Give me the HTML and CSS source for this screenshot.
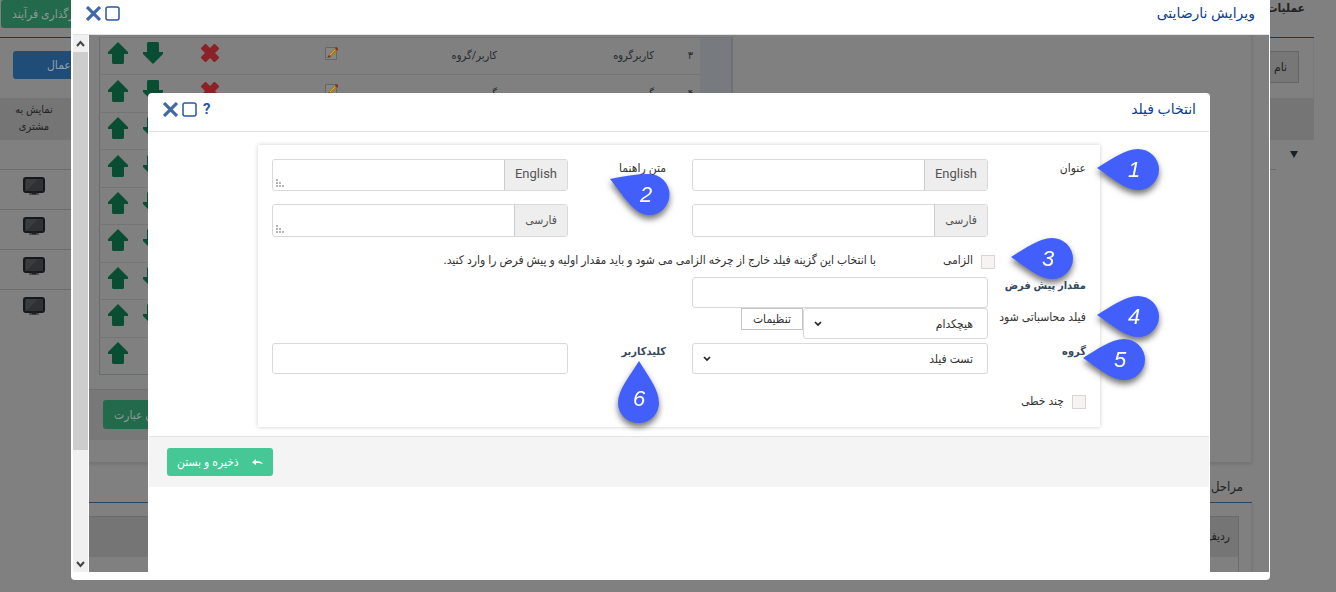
FILE: index.html
```html
<!DOCTYPE html>
<html lang="fa" dir="rtl">
<head>
<meta charset="utf-8">
<title>ویرایش نارضایتی</title>
<link rel="stylesheet" href="styles.css">
</head>
<body>
<svg class="defs" aria-hidden="true">
  <symbol id="arrow" viewBox="0 0 20 22"><path d="M10 0 20 10v2h-4v9l-1 1H5l-1-1v-9H0v-2z" fill="#094d33"/></symbol>
  <symbol id="cross" viewBox="0 0 18 18"><path d="M4 0h1l4 4 4-4h1l4 4v1l-4 4 4 4v1l-4 4h-1l-4-4-4 4H4l-4-4v-1l4-4-4-4V4z" fill="#8b2227"/></symbol>
  <symbol id="edit" viewBox="0 0 14 15"><path d="M.5 1.500h11v12H.5z" fill="#858585" stroke="#666"/><path d="m3 12 1-4 6-6 3 2-6 6z" fill="#a37b1c"/><path d="m5 9 5-5" stroke="#c8b355"/><path d="m10 2 1-1 2 1v2l-1 1z" fill="#803128"/><path d="m2 12 2-3 2 2z" fill="#6b3520"/></symbol>
  <symbol id="screen" viewBox="0 0 22 18"><rect x="1" y="1" width="20" height="14" rx="2" fill="#303133" stroke="#17181d" stroke-width="2"/><path d="M3 14 15 2H3z" fill="#3a3b3c"/><path d="M9 15h4v2H9zM6 17h10" fill="#17181d" stroke="#222329"/></symbol>
  <symbol id="close" viewBox="0 0 14 14"><path d="m2 2 10 10M12 2 2 12" stroke="#4068aa" stroke-width="3" stroke-linecap="square"/></symbol>
  <symbol id="box" viewBox="0 0 15 15"><rect x="1" y="1" width="13" height="13" rx="2" fill="none" stroke="#2b56a0" stroke-width="1.500"/></symbol>
  <symbol id="chevron" viewBox="0 0 8 6"><path d="m1 1 3 3 3-3" fill="none" stroke="#222" stroke-width="1.700"/></symbol>
  <symbol id="grip" viewBox="0 0 8 8"><path d="M0 0h2v2H0zM0 3h2v2H0zM3 3h2v2H3zM0 6h2v2H0zM3 6h2v2H3zM6 6h2v2H6z" fill="#b5b5b5"/></symbol>
  <symbol id="drop" viewBox="0 0 62 42"><path d="M0 19C15 10 28 0 41 0a21 20.500 0 0 1 0 41C28 41 15 29 0 19z" fill="#425ffc"/></symbol>
</svg>

<div class="page">
  <header class="page-head">
    <h1 class="page-title">عملیات</h1>
    <button class="btn green upload">بارگذاری فرآیند</button>
  </header>
  <div class="page-tools">
    <span class="name-tag">نام</span>
    <button class="btn blue apply">اعمال</button>
  </div>
  <div class="list-head"><span class="list-col">نمایش به مشتری</span></div>
  <div class="list">
    <div class="list-row first"><svg class="caret" viewBox="0 0 8 7"><path d="M0 0h8L4 7z" fill="#182028"/></svg></div>
    <div class="list-row"><svg class="screen"><use href="#screen"/></svg></div>
    <div class="list-row"><svg class="screen"><use href="#screen"/></svg></div>
    <div class="list-row"><svg class="screen"><use href="#screen"/></svg></div>
    <div class="list-row"><svg class="screen"><use href="#screen"/></svg></div>
  </div>
</div>

<section class="window outer">
  <header class="window-head outer-head">
    <h2 class="window-title">ویرایش نارضایتی</h2>
    <div class="window-tools">
      <button class="icon-btn" aria-label="بزرگ‌نمایی"><svg class="i-box"><use href="#box"/></svg></button>
      <button class="icon-btn" aria-label="بستن"><svg class="i-close"><use href="#close"/></svg></button>
    </div>
  </header>
  <div class="outer-body">
    <div class="content">
      <div class="panel">
        <div class="panel-split">
          <table class="steps">
            <tbody>
              <tr><td class="c-bar" rowspan="9"></td><td class="c-no">۳</td><td class="c-name">کاربرگروه</td><td class="c-type">کاربر/گروه</td><td class="c-edit"><svg class="i-edit"><use href="#edit"/></svg></td><td class="c-del"><svg class="i-del"><use href="#cross"/></svg></td><td class="c-down"><svg class="i-arrow down"><use href="#arrow"/></svg></td><td class="c-up"><svg class="i-arrow"><use href="#arrow"/></svg></td></tr>
              <tr><td class="c-no">۴</td><td>گروه</td><td>گروه</td><td><svg class="i-edit"><use href="#edit"/></svg></td><td><svg class="i-del"><use href="#cross"/></svg></td><td><svg class="i-arrow down"><use href="#arrow"/></svg></td><td><svg class="i-arrow"><use href="#arrow"/></svg></td></tr>
              <tr><td></td><td></td><td></td><td></td><td></td><td><svg class="i-arrow down"><use href="#arrow"/></svg></td><td><svg class="i-arrow"><use href="#arrow"/></svg></td></tr>
              <tr><td></td><td></td><td></td><td></td><td></td><td><svg class="i-arrow down"><use href="#arrow"/></svg></td><td><svg class="i-arrow"><use href="#arrow"/></svg></td></tr>
              <tr><td></td><td></td><td></td><td></td><td></td><td><svg class="i-arrow down"><use href="#arrow"/></svg></td><td><svg class="i-arrow"><use href="#arrow"/></svg></td></tr>
              <tr><td></td><td></td><td></td><td></td><td></td><td><svg class="i-arrow down"><use href="#arrow"/></svg></td><td><svg class="i-arrow"><use href="#arrow"/></svg></td></tr>
              <tr><td></td><td></td><td></td><td></td><td></td><td><svg class="i-arrow down"><use href="#arrow"/></svg></td><td><svg class="i-arrow"><use href="#arrow"/></svg></td></tr>
              <tr><td></td><td></td><td></td><td></td><td></td><td><svg class="i-arrow down"><use href="#arrow"/></svg></td><td><svg class="i-arrow"><use href="#arrow"/></svg></td></tr>
              <tr><td></td><td></td><td></td><td></td><td></td><td></td><td><svg class="i-arrow"><use href="#arrow"/></svg></td></tr>
            </tbody>
          </table>
        </div>
        <div class="panel-foot"><button class="btn green phrase">افزودن عبارت</button></div>
      </div>
      <h3 class="stage-title">مراحل</h3>
      <div class="panel stage-panel">
        <div class="stage-table"><div class="stage-head">ردیف</div></div>
      </div>
    </div>
    <div class="scrollbar" aria-hidden="true">
      <svg class="sb-arrow" viewBox="0 0 15 17"><path d="m4 11 3.500-4 3.500 4" fill="none" stroke="#444" stroke-width="2"/></svg>
      <div class="sb-thumb"></div>
      <svg class="sb-arrow" viewBox="0 0 15 17"><path d="m4 7 3.500 4L11 7" fill="none" stroke="#444" stroke-width="2"/></svg>
    </div>

    <section class="window inner">
      <header class="window-head inner-head">
        <h2 class="window-title">انتخاب فیلد</h2>
        <div class="window-tools">
          <button class="icon-btn help">?</button>
          <button class="icon-btn" aria-label="بزرگ‌نمایی"><svg class="i-box"><use href="#box"/></svg></button>
          <button class="icon-btn" aria-label="بستن"><svg class="i-close"><use href="#close"/></svg></button>
        </div>
      </header>
      <form class="card">
        <div class="pair">
          <div class="field">
            <span class="label">عنوان</span>
            <div class="stack">
              <div class="group"><label class="addon" for="t-en">English</label><input class="control" id="t-en" type="text"></div>
              <div class="group fa"><label class="addon" for="t-fa">فارسی</label><input class="control" id="t-fa" type="text"></div>
            </div>
          </div>
          <div class="field">
            <span class="label">متن راهنما</span>
            <div class="stack">
              <div class="group"><label class="addon" for="h-en">English</label><textarea class="control" id="h-en" rows="1"></textarea><svg class="grip"><use href="#grip"/></svg></div>
              <div class="group fa"><label class="addon" for="h-fa">فارسی</label><textarea class="control" id="h-fa" rows="1"></textarea><svg class="grip"><use href="#grip"/></svg></div>
            </div>
          </div>
        </div>
        <div class="check-row required">
          <input class="tick" id="req" type="checkbox"><label class="check-label" for="req">الزامی</label>
          <span class="hint">با انتخاب این گزینه فیلد خارج از چرخه الزامی می شود و باید مقدار اولیه و پیش فرض را وارد کنید.</span>
        </div>
        <div class="pair">
          <div class="field">
            <label class="label strong" for="def">مقدار پیش فرض</label>
            <input class="control box" id="def" type="text">
          </div>
        </div>
        <div class="pair">
          <div class="field">
            <label class="label" for="calc">فیلد محاسباتی شود</label>
            <div class="calc">
              <div class="select-wrap calc-select"><select class="control box" id="calc"><option>هیچکدام</option></select><svg class="chev"><use href="#chevron"/></svg></div>
              <button class="settings" type="button">تنظیمات</button>
            </div>
          </div>
        </div>
        <div class="pair keys">
          <div class="field">
            <label class="label strong" for="grp">گروه</label>
            <div class="select-wrap"><select class="control box" id="grp"><option>تست فیلد</option></select><svg class="chev"><use href="#chevron"/></svg></div>
          </div>
          <div class="field">
            <label class="label strong" for="key">کلیدکاربر</label>
            <input class="control box" id="key" type="text">
          </div>
        </div>
        <div class="check-row multi">
          <input class="tick" id="multi" type="checkbox"><label class="check-label" for="multi">چند خطی</label>
        </div>

        <div class="pin p1"><svg class="drop"><use href="#drop"/></svg><span class="num">1</span></div>
        <div class="pin p2"><svg class="drop tilted" viewBox="0 0 60 41"><path d="M0 5C14 2 26 0 39 0a20.500 20.500 0 0 1 0 41C24 41 13 21 0 5z" fill="#425ffc"/></svg><span class="num">2</span></div>
        <div class="pin p3"><svg class="drop"><use href="#drop"/></svg><span class="num">3</span></div>
        <div class="pin p4"><svg class="drop"><use href="#drop"/></svg><span class="num">4</span></div>
        <div class="pin p5"><svg class="drop"><use href="#drop"/></svg><span class="num">5</span></div>
        <div class="pin p6"><svg class="drop upright" viewBox="0 0 42 62"><path d="M21 0C30 15 41 28 41 42a20.500 20 0 0 1-41 0C0 28 12 15 21 0z" fill="#425ffc"/></svg><span class="num">6</span></div>
      </form>
      <footer class="inner-foot">
        <button class="save"><svg class="back" viewBox="0 0 11 7"><path d="M0 3.500 4 0v2c4 0 6 1 7 3-2-1-4-1-7-1v2z" fill="#fff"/></svg>ذخیره و بستن</button>
      </footer>
    </section>
  </div>
</section>
</body>
</html>
```
FILE: styles.css
```css
* { box-sizing: border-box; }
body { margin: 0; height: 100vh; overflow: hidden; background: #808080; color: #333; font: 12px/18px Roboto, "DejaVu Sans Condensed", "DejaVu Sans", sans-serif; }
button, input, textarea, select { font: inherit; color: inherit; margin: 0; padding: 0; border: 0; background: none; }
h1, h2, h3 { margin: 0; font-weight: normal; }
svg { display: block; }
.defs { position: absolute; width: 0; height: 0; }

/* page behind the windows */
.page { padding-right: 22px; }
.page-head { display: flex; justify-content: space-between; align-items: flex-start; height: 38px; border-bottom: 1px solid #1c3850; }
.page-title { padding-right: 9px; font-size: 12px; font-weight: bold; line-height: 16px; color: #222; }
.btn { border-radius: 3px; color: #8f9a96; white-space: nowrap; }
.green { background: #226a4b; }
.blue { background: #1f4d78; color: #98a2ac; }
.upload { height: 28px; margin-left: 1px; padding: 0 11px; }
.page-tools { display: flex; justify-content: space-between; align-items: flex-start; height: 60px; padding: 13px 14px 0 13px; border-right: 1px solid #7a7a7a; }
.name-tag { height: 32px; padding: 0 11px; border: 1px solid #666; background: #777; line-height: 30px; color: #222; }
.apply { height: 28px; padding: 0 34px; }
.list-head { display: flex; justify-content: flex-end; height: 42px; background: #757575; }
.list-col { width: 68px; padding: 3px 10px; text-align: center; font-size: 11px; line-height: 17px; color: #222; }
.list-row { display: flex; justify-content: flex-end; align-items: center; height: 40px; padding-left: 23px; margin-right: 100px; border-bottom: 1px solid #6c6c6c; }
.list-row.first { height: 30px; margin-right: 38px; justify-content: flex-start; }
.list-row:last-child { border: 0; }
.caret { width: 8px; height: 7px; margin-right: -22px; }
.screen { width: 22px; height: 18px; margin-bottom: 8px; }

/* windows */
.window { position: absolute; background: #fff; display: flex; flex-direction: column; }
.outer { inset: 0 66px 12px 71px; padding: 0 1px 8px 2px; border-radius: 0 0 4px 4px; }
.inner { inset: 58px 59px 0 75px; border-radius: 4px 4px 0 0; padding: 0 1px; }
.window-head { display: flex; justify-content: space-between; align-items: flex-start; flex: none; border-bottom: 1px solid #e2e2e2; }
.outer-head { height: 35px; padding: 3px 14px 0 13px; }
.inner-head { height: 39px; padding: 6px 13px 0 14px; }
.window-title { font-family: Roboto, "DejaVu Sans", sans-serif; font-size: 14px; line-height: 20px; color: #0d3f8f; }
.window-tools { display: flex; align-items: center; gap: 4px; height: 20px; }
.icon-btn { display: flex; color: #2b56a0; }
.help { padding: 0 2px; font-size: 15px; font-weight: bold; }
.i-box { width: 15px; height: 15px; }
.i-close { width: 15px; height: 15px; }
.outer-body { position: relative; flex: 1; min-height: 0; display: flex; overflow: hidden; }
.content { flex: 1; min-width: 0; background: #808080; overflow: hidden; }
.scrollbar { flex: none; width: 16px; display: flex; flex-direction: column; background: #f0f0f0; border-right: 1px solid #fff; }
.sb-arrow { flex: none; width: 15px; height: 17px; }
.sb-thumb { height: 398px; background: #cdcdcd; margin-bottom: auto; }

/* dimmed content of the outer window */
.panel { margin-right: 17px; border-right: 1px solid #787878; border-bottom: 1px solid #757575; box-shadow: 0 1px 3px #707070; height: 428px; }
.panel-split { height: 354px; padding: 2px 518px 0 10px; }
.steps { width: 100%; height: 338px; border-collapse: collapse; table-layout: fixed; border: 1px solid #666d6e; border-top: 0; color: #20282e; font-size: 11px; }
.steps td { height: 37px; padding: 0; border-top: 1px solid #757575; }
.steps .c-bar { width: 32px; background: #777a7e; border-right: 2px solid #6b7176; }
.steps .c-no { width: 46px; padding-right: 7px; }
.c-name { width: 157px; }
.c-type { width: 158px; }
.c-edit { width: 120px; }
.c-del { width: 56px; }
.c-down { width: 35px; }
.i-arrow { width: 20px; height: 22px; }
.steps svg { margin-bottom: 6px; }
.down { transform: rotate(180deg); }
.i-del { width: 18px; height: 18px; }
.i-edit { width: 14px; height: 15px; }
.panel-foot { display: flex; justify-content: flex-end; height: 51px; margin-right: 518px; padding: 10px 14px; border-top: 1px solid #707070; background: #787878; }
.phrase { height: 29px; padding: 0 11px; }
.stage-title { height: 40px; margin-right: 17px; padding: 12px 9px 0; border-bottom: 1px solid #173e63; font-size: 13px; line-height: 24px; color: #222; }
.stage-panel { padding: 13px 12px 0 0; }
.stage-table { height: 200px; border: 1px solid #666d6e; border-left: 0; }
.stage-head { height: 40px; padding-right: 8px; background: #757575; line-height: 38px; color: #222; }

/* field form */
.card { position: relative; flex: none; margin: 13px 109px 0; padding: 14px; height: 282px; background: #fff; box-shadow: 0 0 4px #ccc; }
.pair { display: grid; grid-template-columns: 1fr 1fr; column-gap: 26px; }
.field { display: grid; grid-template-columns: 98px 1fr; align-items: start; }
.label { white-space: nowrap; }
.strong { font-size: 11px; font-weight: bold; color: #34495e; }
.stack { display: grid; gap: 13px; }
.group { position: relative; display: flex; height: 32px; border: 1px solid #d9d9d9; border-radius: 3px; }
.group.fa { height: 33px; }
.addon { flex: none; padding: 0 10px; background: #eee; border-left: 1px solid #ccc; font-size: 13px; line-height: 28px; color: #555; }
.fa .addon { font-size: 12px; line-height: 30px; }
.control { width: 100%; min-width: 0; flex: 1; height: 100%; background: #fff; resize: none; }
.group .control { border-radius: 3px 0 0 3px; }
.grip { position: absolute; left: 3px; bottom: 3px; width: 8px; height: 8px; }
.box { display: block; height: 31px; border: 1px solid #d9d9d9; border-radius: 3px; }
.select-wrap { position: relative; }
.select-wrap .box { appearance: none; padding: 0 14px; }
.chev { position: absolute; left: 11px; top: 13px; width: 8px; height: 6px; }
.calc { display: flex; align-items: flex-start; }
.calc-select { width: 185px; }
.settings { height: 22px; padding: 0 11px; border: 1px solid #c4c4c4; }
.keys { margin-top: 4px; }
.check-row { display: flex; align-items: center; gap: 8px; }
.tick { appearance: none; width: 14px; height: 14px; border: 1px solid #d9d5d5; background: #f7f3f3; }
.required { height: 40px; padding: 6px 91px 0 0; }
.required .tick { margin-top: 4px; }
.hint { margin-right: 59px; white-space: nowrap; }
.multi { margin-top: 17px; height: 20px; }
.multi .tick { margin-top: 2px; }

/* numbered pins over the form */
.pin { position: absolute; filter: drop-shadow(0 4px 3px rgba(0, 0, 0, .55)); display: grid; place-items: center; direction: ltr; }
.pin > * { grid-area: 1 / 1; }
.drop { width: 62px; height: 42px; }
.tilted { width: 60px; height: 41px; }
.upright { width: 42px; height: 62px; }
.num { padding-left: 12px; font: italic 22px/24px "Liberation Sans", Arial, sans-serif; color: #fff; }
.p1 { top: 4px; right: -59px; }
.p2 { top: 29px; right: calc(50% + 9px); }
.p3 { top: 93px; right: 27px; }
.p4 { top: 151px; right: -59px; }
.p5 { top: 194px; right: -45px; }
.p6 { top: 216px; right: calc(50% + 19px); }
.p6 .num { padding: 14px 0 0; }

.inner-foot { display: flex; justify-content: flex-end; margin-top: 9px; height: 51px; padding: 11px 18px; border-top: 1px solid #e2e2e2; background: #f4f4f4; }
.save { display: flex; align-items: center; gap: 13px; height: 28px; padding: 0 10px; border-radius: 3px; background: #45c796; color: #fff; }
.back { width: 11px; height: 7px; }
```
